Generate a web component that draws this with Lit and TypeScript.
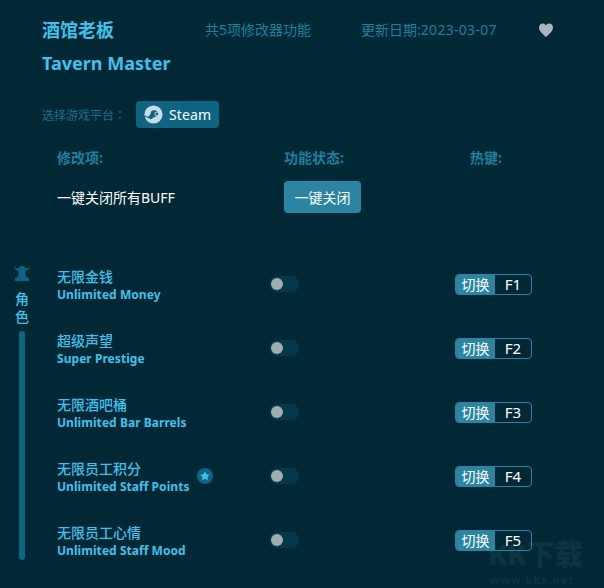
import { LitElement, html, css } from "lit";
import { customElement } from "lit/decorators.js";

const rows = [
  { cn: "无限金钱", en: "Unlimited Money", key: "F1", star: false },
  { cn: "超级声望", en: "Super Prestige", key: "F2", star: false },
  { cn: "无限酒吧桶", en: "Unlimited Bar Barrels", key: "F3", star: false },
  { cn: "无限员工积分", en: "Unlimited Staff Points", key: "F4", star: true },
  { cn: "无限员工心情", en: "Unlimited Staff Mood", key: "F5", star: false },
];

@customElement("app-root")
export class AppRoot extends LitElement {
  static styles = css`
    :host {
      display: block;
      position: relative;
      width: 604px;
      height: 588px;
      overflow: hidden;
      background: #012935;
      font-family: "Noto Sans", "Noto Sans CJK SC", sans-serif;
      color: #3fc1ee;
    }
    .head { display: flex; align-items: center; height: 24px; padding: 18px 0 0 42px; }
    .title { width: 163px; font-size: 18px; font-weight: 700; line-height: 24px; }
    .meta { font-size: 14px; color: #1f7f9f; line-height: 24px; }
    .count { width: 156px; }
    .date { width: 177px; }
    .digits { letter-spacing: 0.3px; }
    .heart { width: 16px; height: 16px; display: block; }
    .en-title { padding: 9px 0 0 42px; font-size: 18px; font-weight: 700; line-height: 24px; }
    .platform { display: flex; align-items: center; padding: 26px 0 0 42px; }
    .platform-label { width: 94px; font-size: 12px; color: #1a6f8c; font-family: "Noto Sans", "Noto Sans CJK TC", sans-serif; white-space: nowrap; }
    .steam {
      display: flex; align-items: center; gap: 6px; box-sizing: border-box;
      width: 83px; height: 27px; padding-left: 8px; border-radius: 4px;
      background: #0d6583; color: #fff; font-size: 14px; letter-spacing: 0.15px;
    }
    .steam svg { width: 19px; height: 19px; display: block; }
    .cols {
      display: grid; grid-template-columns: 227px 186px 1fr;
      padding: 20px 0 0 57px; font-size: 14px; font-weight: 700; line-height: 20px; color: #1f7f9f;
    }
    .all { display: flex; align-items: center; padding: 13px 0 0 57px; }
    .all-label { width: 227px; color: #fff; font-size: 14px; }
    .all-btn {
      box-sizing: border-box; width: 77px; height: 32px; border-radius: 4px;
      display: flex; align-items: center; justify-content: center;
      background: #2a84a2; color: #fff; font-size: 14px;
    }
    .body { display: flex; padding: 36px 0 0 14px; position: relative; z-index: 1; }
    .side { width: 16px; height: 295px; padding-top: 16px; display: flex; flex-direction: column; align-items: center; }
    .side svg { width: 16px; height: 16px; display: block; }
    .side-text { padding-top: 9px; font-size: 14px; font-weight: 500; line-height: 18px; text-align: center; width: 16px; }
    .bar { width: 6px; flex: 1; margin-top: 5px; border-radius: 3px; background: #0d6583; }
    .list { padding: 3px 0 0 27px; flex: 1; }
    .row { display: grid; grid-template-columns: 212px 186px 77px; align-items: center; height: 64px; }
    .row-name { display: flex; align-items: center; }
    .labels { width: 140px; padding-top: 3px; }
    .cn { font-size: 14px; line-height: 18px; font-weight: 500; }
    .en { font-size: 12px; line-height: 18px; font-weight: 700; white-space: nowrap; letter-spacing: 0.05px; }
    .star { width: 16px; height: 16px; display: block; }
    .switch { box-sizing: border-box; width: 30px; height: 16px; padding: 2px; border-radius: 8px; background: #03394a; }
    .knob { width: 12px; height: 12px; border-radius: 50%; background: #a5abb0; }
    .key {
      box-sizing: border-box; display: flex; height: 21px; width: 77px; border: 1px solid #2a84a2;
      border-radius: 4px; overflow: hidden; font-size: 14px; line-height: 19px; color: #fff;
    }
    .key-a { width: 39px; background: #2a84a2; text-align: center; }
    .key-b { flex: 1; text-align: center; font-size: 15px; }
    .mark { position: absolute; left: 488px; top: 538px; width: 116px; color: #0c3441; pointer-events: none; }
    .mark-big { font-size: 28px; font-weight: 900; line-height: 32px; white-space: nowrap; }
    .mark-url { padding: 3px 0 0 2px; font-size: 11px; font-weight: 700; line-height: 13px; letter-spacing: 1.1px; white-space: nowrap; }
  `;

  render() {
    return html`
      <div class="head">
        <div class="title">酒馆老板</div>
        <div class="meta count">共5项修改器功能</div>
        <div class="meta date">更新日期:<span class="digits">2023-03-07</span></div>
        <svg class="heart" viewBox="0 0 16 16"><path fill="#a9b4bc" d="M8 15C4 11.6 1 9 1 5.600 1 3.200 2.800 1.600 4.800 1.600c1.300 0 2.500.6 3.200 1.800.7-1.200 1.900-1.800 3.200-1.800 2 0 3.800 1.600 3.800 4 0 3.400-3 6-7 9.400z"/></svg>
      </div>
      <div class="en-title">Tavern Master</div>
      <div class="platform">
        <div class="platform-label">选择游戏平台：</div>
        <div class="steam">
          <svg viewBox="0 0 20 20">
            <circle cx="10" cy="10" r="9.500" fill="#c9dbe8"/>
            <path fill="#0d6583" d="M.6 12.200l5 2.100a2.800 2.800 0 0 0 1.800.7l3-2.200a3.600 3.600 0 1 0-3.400-3.600L5 12a2.800 2.800 0 0 0-1.200.3L.5 10.900z"/>
            <circle cx="13.500" cy="9.500" r="2.500" fill="#c9dbe8"/><circle cx="13.500" cy="9.500" r="1.500" fill="#0d6583"/>
          </svg>
          <span>Steam</span>
        </div>
      </div>
      <div class="cols"><span>修改项:</span><span>功能状态:</span><span>热键:</span></div>
      <div class="all"><div class="all-label">一键关闭所有BUFF</div><div class="all-btn">一键关闭</div></div>
      <div class="mark"><div class="mark-big">KK下载</div><div class="mark-url">www.kkx.net</div></div>
      <div class="body">
        <div class="side">
          <svg viewBox="0 0 16 16"><path fill="#0d6583" d="M0 0c.3 2 1.300 3 3 3.300h1.500C5 1.800 6.200 1 8 1s3 .8 3.500 2.300H13c1.700-.3 2.700-1.300 3-3.300.2 3-1 5-3.500 5.500h-1V10.500c0 1 .9 1.800 3.500 2.500v3H1v-3c2.600-.7 3.500-1.500 3.500-2.500V5.500h-1C1 5-.2 3 0 0z"/></svg>
          <div class="side-text">角色</div>
          <div class="bar"></div>
        </div>
        <div class="list">
          ${rows.map(
            (r) => html`
              <div class="row">
                <div class="row-name">
                  <div class="labels"><div class="cn">${r.cn}</div><div class="en">${r.en}</div></div>
                  ${r.star
                    ? html`<svg class="star" viewBox="0 0 16 16"><circle cx="8" cy="8" r="8" fill="#0d6583"/><path fill="#3fc1ee" d="M8 3.200l1.500 3 3.300.5-2.400 2.300.6 3.300L8 10.700l-3 1.600.6-3.300-2.400-2.300 3.300-.5z"/></svg>`
                    : ""}
                </div>
                <div class="switch"><div class="knob"></div></div>
                <div class="key"><div class="key-a">切换</div><div class="key-b">${r.key}</div></div>
              </div>
            `
          )}
        </div>
      </div>
    `;
  }
}
